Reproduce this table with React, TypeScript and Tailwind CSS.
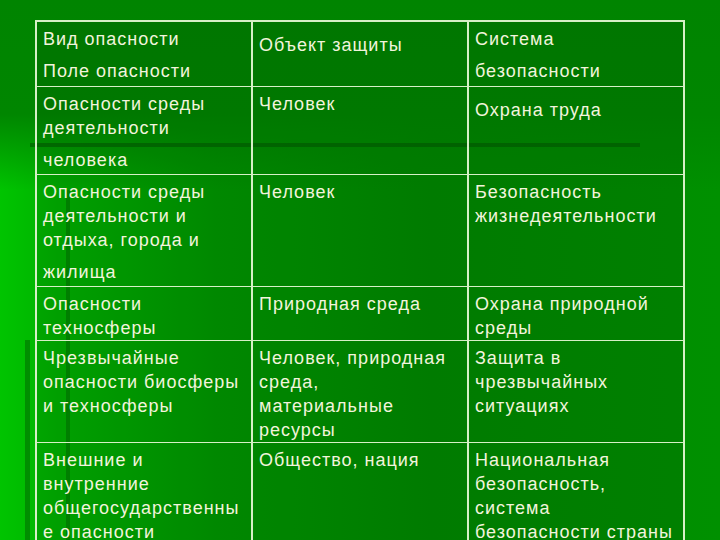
import React from 'react';

type Cell = { paras: string[][]; pt?: string };

const rows: { h: string; cells: Cell[] }[] = [
  {
    h: 'h-[64px]',
    cells: [
      { paras: [['Вид опасности'], ['Поле опасности']] },
      { paras: [['Объект защиты']], pt: 'pt-[11px]' },
      { paras: [['Система'], ['безопасности']] },
    ],
  },
  {
    h: 'h-[88px]',
    cells: [
      { paras: [['Опасности среды', 'деятельности'], ['человека']] },
      { paras: [['Человек']] },
      { paras: [['Охрана труда']], pt: 'pt-[11px]' },
    ],
  },
  {
    h: 'h-[112px]',
    cells: [
      { paras: [['Опасности среды', 'деятельности и', 'отдыха, города и'], ['жилища']] },
      { paras: [['Человек']] },
      { paras: [['Безопасность', 'жизнедеятельности']] },
    ],
  },
  {
    h: 'h-[54px]',
    cells: [
      { paras: [['Опасности', 'техносферы']] },
      { paras: [['Природная среда']] },
      { paras: [['Охрана природной', 'среды']] },
    ],
  },
  {
    h: 'h-[102px]',
    cells: [
      { paras: [['Чрезвычайные', 'опасности биосферы', 'и техносферы']] },
      { paras: [['Человек, природная', 'среда,', 'материальные', 'ресурсы']] },
      { paras: [['Защита в', 'чрезвычайных', 'ситуациях']] },
    ],
  },
  {
    h: 'h-[120px]',
    cells: [
      { paras: [['Внешние и', 'внутренние', 'общегосударственны', 'е опасности']] },
      { paras: [['Общество, нация']] },
      { paras: [['Национальная', 'безопасность,', 'система', 'безопасности страны']] },
    ],
  },
];

export default function App() {
  return (
    <div
      className="relative w-[720px] h-[540px] overflow-hidden bg-[linear-gradient(to_right,#00c400_0%,#00b200_8%,#009800_30%,#008a00_60%,#009000_100%)] text-[#f2f4dc]"
      style={{ fontFamily: '"Liberation Sans", Arial, sans-serif' }}
    >
      {/* top band of the slide template */}
      <div className="absolute inset-x-0 top-0 h-[190px] bg-[linear-gradient(to_bottom,#008400_0%,#008600_60%,rgba(0,134,0,0)_100%)]" />
      {/* template decoration lines */}
      <div className="absolute left-[30px] top-[143px] w-[610px] h-[4px] bg-[#006400]/70" />
      <div className="absolute left-[66px] top-[190px] w-[4px] h-[350px] bg-[#006c00]/50" />
      <div className="absolute left-[25px] top-[340px] w-[5px] h-[200px] bg-[#007000]/60" />

      <div className="relative ml-[35px] mt-[20px] w-[650px] border-2 border-b-0 border-[#d6f0c6]">
        {rows.map((row, ri) => (
          <div key={ri} className={`flex ${row.h} ${ri > 0 ? 'border-t border-[#d6f0c6]' : ''}`}>
            {row.cells.map((c, ci) => (
              <div
                key={ci}
                className={`w-[214px] shrink-0 bg-black/10 px-[6px] ${c.pt ?? 'pt-[5px]'} text-[18px] leading-[24px] tracking-[1px] ${
                  ci > 0 ? 'border-l-2 border-[#d6f0c6] w-[216px]' : ''
                }`}
              >
                {c.paras.map((p, pi) => (
                  <p key={pi} className={pi > 0 ? 'mt-[8px]' : ''}>
                    {p.map((line, li) => (
                      <span key={li} className="block whitespace-nowrap">
                        {line}
                      </span>
                    ))}
                  </p>
                ))}
              </div>
            ))}
          </div>
        ))}
      </div>
    </div>
  );
}
